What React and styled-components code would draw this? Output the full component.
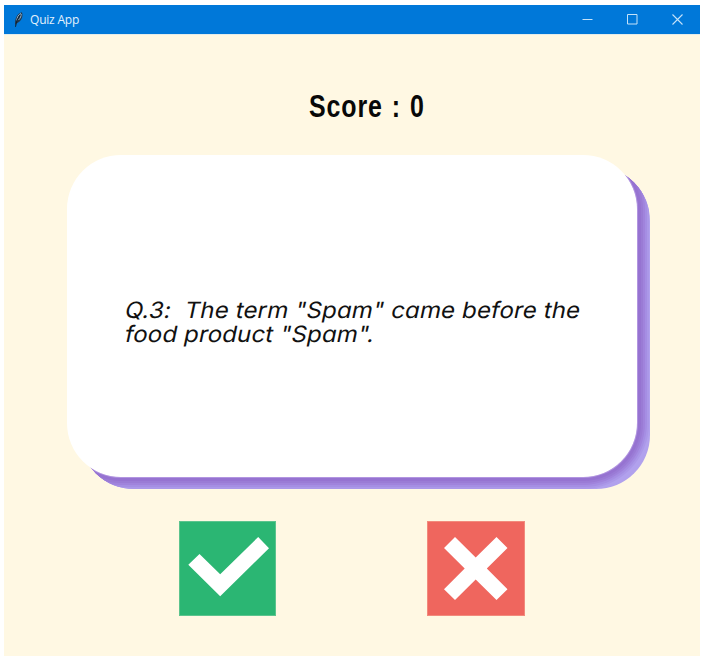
import React from "react";
import styled, { createGlobalStyle } from "styled-components";

const GlobalStyle = createGlobalStyle`
  * { box-sizing: border-box; }
  html, body { margin: 0; background: #fff; }
`;

const Page = styled.div`
  width: 704px;
  height: 656px;
  padding: 5px 4px 0;
  overflow: hidden;
`;

const Window = styled.main`
  display: flex;
  flex-direction: column;
  height: 651px;
  background: #fff8e3;
`;

const TitleBar = styled.header`
  display: flex;
  align-items: center;
  flex: none;
  height: 29px;
  padding-left: 9px;
  background: #0078d9;
  color: #e3f1fc;
`;

const WindowTitle = styled.span`
  flex: 1;
  margin-left: 5px;
  font: 400 12px/29px "Open Sans", "Noto Sans", sans-serif;
  letter-spacing: -0.2px;
`;

const WindowControl = styled.button`
  display: grid;
  place-items: center;
  width: 45px;
  height: 29px;
  padding: 0;
  border: 0;
  background: none;
  color: #c5e2f8;
`;

const Content = styled.section`
  display: flex;
  flex-direction: column;
  flex: 1;
  border-top: 1px solid #e4ecea;
`;

const Score = styled.h1`
  align-self: flex-start;
  margin: 54px 0 0 305px;
  height: 36px;
  color: #080808;
  font: 700 31px/36px "Liberation Sans", Arial, sans-serif;
  letter-spacing: 1.1px;
  word-spacing: 1.5px;
  white-space: nowrap;
  transform: scaleX(0.805);
  transform-origin: left;
`;

const CardStack = styled.div`
  display: grid;
  width: 583px;
  height: 334px;
  margin: 30px 0 0 63px;
`;

const CardFace = styled.div`
  grid-area: 1 / 1;
  z-index: 1;
  width: 570px;
  height: 322px;
  padding: 143px 0 0 61px;
  border-radius: 54px;
  background: #fff;
`;

const CardDepth = styled.div`
  grid-area: 1 / 1;
  place-self: end;
  position: relative;
  width: 570px;
  height: 322px;
  overflow: hidden;
  border-radius: 54px;
  background: #b1a1ed;

  &::before {
    content: "";
    position: absolute;
    left: -13px;
    top: -12px;
    width: 570px;
    height: 322px;
    border-radius: 54px;
    box-shadow:
      0 0 0 1px #b295e0,
      0 0 0 4px #9673d1,
      0 0 0 6px #9a7bd5,
      0 0 0 8px #a083dc,
      0 0 0 10px #a58ee3,
      0 0 0 12px #ab98e8;
  }
`;

const Question = styled.p`
  width: max-content;
  margin: 0;
  color: #111;
  font: 400 22.5px/23.5px Inter, sans-serif;
  font-feature-settings: "cv11";
  letter-spacing: 0.1px;
  text-indent: -4.6px;
  white-space: pre;
  transform: scaleX(1.07) skewX(-11deg);
  transform-origin: left center;
`;

const Answers = styled.div`
  display: flex;
  gap: 151px;
  margin: 32px 0 0 174.5px;
`;

const AnswerButton = styled.button`
  width: 97.5px;
  height: 95px;
  padding: 0;
  border: 1px solid ${(p) => p.$edge};
  background: ${(p) => p.$fill};

  svg { display: block; margin: -1px; }
`;

function FeatherIcon() {
  return (
    <svg width="12" height="18" viewBox="0 0 12 18">
      <path d="M2.2 14C1.4 8.5 3.6 2.7 8.8 1.2c1.8 3.4-.2 9-4.8 11z" fill="#23384c" />
      <path d="M3.8 9.5C4 6 5.7 3.4 8 2.4M5.5 9C7.5 7 8.2 5 8.2 3" fill="none" stroke="#8fb2cf" strokeWidth="1" />
      <path d="M2.5 15.8C3.3 11 4.7 7 7 4.2" fill="none" stroke="#10202f" strokeWidth="1" />
    </svg>
  );
}

export default function App() {
  return (
    <>
      <GlobalStyle />
      <Page>
        <Window>
          <TitleBar>
            <FeatherIcon />
            <WindowTitle>Quiz App</WindowTitle>
            <WindowControl aria-label="Minimize">
              <svg width="11" height="11"><path d="M.5 5.5h10" stroke="currentColor" /></svg>
            </WindowControl>
            <WindowControl aria-label="Maximize">
              <svg width="11" height="11"><path d="M.5.5h9.5v9.5H.5z" fill="none" stroke="currentColor" /></svg>
            </WindowControl>
            <WindowControl aria-label="Close">
              <svg width="11" height="11"><path d="M.5.5l10 10M10.5.5l-10 10" stroke="currentColor" strokeWidth="1.1" /></svg>
            </WindowControl>
          </TitleBar>
          <Content>
            <Score>Score : 0</Score>
            <CardStack>
              <CardDepth />
              <CardFace>
                <Question>{'Q.3:  The term "Spam" came before the\nfood product "Spam".'}</Question>
              </CardFace>
            </CardStack>
            <Answers>
              <AnswerButton aria-label="True" $fill="#2bb673" $edge="#5cc48e">
                <svg width="97" height="95">
                  <path d="M9.3 43.8L20.5 33l20.7 20.2L79.2 16l10.8 11.3L41.2 75.3z" fill="#fff" />
                </svg>
              </AnswerButton>
              <AnswerButton aria-label="False" $fill="#ef665e" $edge="#f28a7c">
                <svg width="97" height="95">
                  <path d="M17 27L28 16l20.7 20.5L69.5 16l11 11-20.7 20.5 20.7 20.7-11 10.8-20.8-20.4L28 79 17 68.2l20.7-20.7z" fill="#fff" />
                </svg>
              </AnswerButton>
            </Answers>
          </Content>
        </Window>
      </Page>
    </>
  );
}
